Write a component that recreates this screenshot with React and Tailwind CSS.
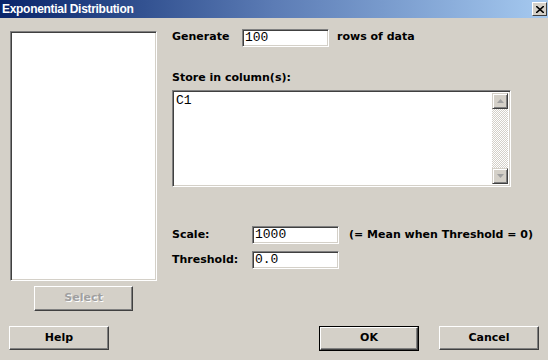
import React, { useState } from "react";

// Classic Win9x sunken field border
const sunken =
  "border border-t-[#808080] border-l-[#808080] border-b-white border-r-white shadow-[inset_1px_1px_0_#404040,inset_-1px_-1px_0_#d4d0c8] bg-white";

const Button = ({ children, isDefault, disabled, className = "" }) => (
  <div
    className={`${className} ${
      isDefault ? "border border-black" : ""
    } bg-[#d4d0c8]`}
  >
    <button
      className={`w-full h-full border border-t-white border-l-white border-b-[#404040] border-r-[#404040] shadow-[inset_-1px_-1px_0_#808080] flex items-center justify-center font-bold text-[11px] font-['DejaVu_Sans',sans-serif] ${
        disabled ? "text-[#a0a0a0] [text-shadow:1px_1px_0_#fff]" : "text-black"
      }`}
    >
      {children}
    </button>
  </div>
);

const Field = ({ value, onChange, className = "" }) => (
  <input
    type="text"
    value={value}
    onChange={(e) => onChange(e.target.value)}
    className={`${sunken} ${className} h-[18px] px-[2px] text-[13px] font-normal outline-none font-['Liberation_Mono',monospace] text-black`}
  />
);

const Arrow = ({ up }) => (
  <div className="w-4 h-4 shrink-0 bg-[#d4d0c8] border border-t-[#d4d0c8] border-l-[#d4d0c8] border-b-[#404040] border-r-[#404040] shadow-[inset_1px_1px_0_#fff,inset_-1px_-1px_0_#808080] flex items-center justify-center">
    <svg width="7" height="4" viewBox="0 0 7 4">
      {up ? (
        <polygon points="3.5,0 7,4 0,4" fill="#a0a0a0" />
      ) : (
        <polygon points="0,0 7,0 3.5,4" fill="#a0a0a0" />
      )}
    </svg>
  </div>
);

const App = () => {
  const [rows, setRows] = useState("100");
  const [scale, setScale] = useState("1000");
  const [threshold, setThreshold] = useState("0.0");

  return (
    <div className="w-[548px] h-[360px] bg-[#d4d0c8] flex flex-col font-['DejaVu_Sans',sans-serif] overflow-hidden">
      {/* Title bar */}
      <div className="h-[18px] shrink-0 flex items-center justify-between pl-[2px] pr-[1px] bg-gradient-to-r from-[#0a246a] via-[#5c7cb5] to-[#a6caf0]">
        <span className="text-white font-bold text-[12px] font-['Liberation_Sans',Arial,sans-serif] tracking-[-0.3px]">
          Exponential Distribution
        </span>
        <div className="w-[15px] h-[14px] bg-[#d4d0c8] border border-t-white border-l-white border-b-[#404040] border-r-[#404040] flex items-center justify-center">
          <svg width="8" height="7" viewBox="0 0 8 7">
            <path d="M0 0 L8 7 M8 0 L0 7" stroke="#000" strokeWidth="1.6" />
          </svg>
        </div>
      </div>

      {/* Body */}
      <div className="flex flex-1">
        {/* Variable list */}
        <div className="w-[147px] ml-[10px] pt-[13px] flex flex-col items-center">
          <div className={`${sunken} w-full h-[250px]`} />
          <Button disabled className="w-[99px] h-[25px] mt-[5px]">
            Select
          </Button>
        </div>

        {/* Options */}
        <div className="ml-[15px] pt-[11px] flex flex-col text-[11px] font-bold text-black">
          <div className="flex items-center h-[17px]">
            <span className="w-[70px]">Generate</span>
            <Field value={rows} onChange={setRows} className="w-[87px]" />
            <span className="ml-[8px]">rows of data</span>
          </div>

          <div className="mt-[25px] h-[14px] leading-[14px]">
            Store in column(s):
          </div>
          <div className={`${sunken} mt-[5px] w-[339px] h-[97px] flex p-[2px]`}>
            <div className="flex-1 pl-[1px] font-['Liberation_Mono',monospace] font-normal text-[13px] leading-[16px]">
              C1
            </div>
            <div className="w-4 flex flex-col bg-[repeating-conic-gradient(#ffffff_0_25%,#d4d0c8_0_50%)] bg-[length:2px_2px]">
              <Arrow up />
              <div className="flex-1" />
              <Arrow />
            </div>
          </div>

          <div className="mt-[39px] flex items-center h-[18px]">
            <span className="w-[80px]">Scale:</span>
            <Field value={scale} onChange={setScale} className="w-[87px]" />
            <span className="ml-[10px]">(= Mean when Threshold = 0)</span>
          </div>
          <div className="mt-[7px] flex items-center h-[18px]">
            <span className="w-[80px]">Threshold:</span>
            <Field
              value={threshold}
              onChange={setThreshold}
              className="w-[87px]"
            />
          </div>
        </div>
      </div>

      {/* Buttons */}
      <div className="h-[34px] flex shrink-0">
        <Button className="ml-[9px] w-[100px] h-[24px]">Help</Button>
        <Button isDefault className="ml-[210px] w-[100px] h-[25px]">
          OK
        </Button>
        <Button className="ml-[20px] w-[100px] h-[24px]">Cancel</Button>
      </div>
    </div>
  );
};

export default App;
